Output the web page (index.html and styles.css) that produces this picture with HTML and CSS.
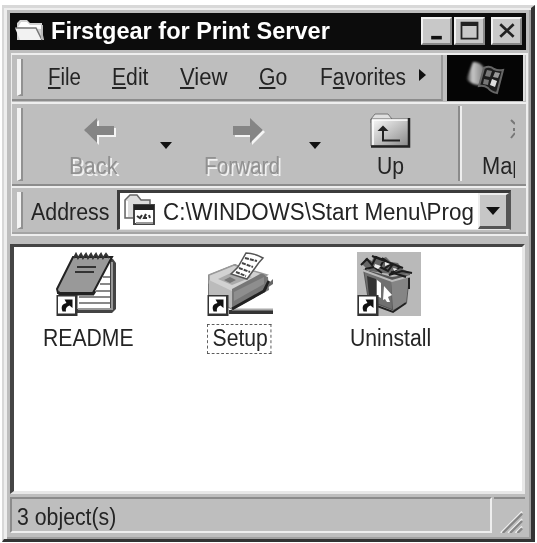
FILE: index.html
```html
<!DOCTYPE html>
<html lang="en">
<head>
<meta charset="utf-8">
<title>Firstgear for Print Server</title>
<link rel="stylesheet" href="styles.css">
</head>
<body>
<svg width="0" height="0" class="defs">
  <symbol id="shortcut" viewBox="0 0 21 21">
    <path d="M0 0H21V21H0Z" fill="#333"/><path d="M1.500 1.500H18.500V18.500H1.500Z" fill="#fff"/>
    <path d="M6 16.500C4 11 6 9 10 8L8 4.500H16V13L13 10.500C10 12 9 13 9.500 16.500Z" fill="#111"/>
  </symbol>
</svg>
<main class="window">
  <header class="titlebar">
    <svg class="folder" viewBox="0 0 32 26"><path d="M3 22V5L6 2H13L16 5H28V12L30 22Z" fill="#d2d2d2"/><path d="M4 9L7 4H13L16 7H27V11" fill="#fff"/><path d="M1 10H22L28 22H6Z" fill="#f2f2f2"/><path d="M1 10H22L28 22" fill="none" stroke="#777" stroke-width="1.5"/><path d="M28 7V21" stroke="#bbb" stroke-width="2"/></svg>
    <h1><span class="t title-text">Firstgear for Print Server</span></h1>
    <div class="controls">
      <button aria-label="Minimize"><svg viewBox="0 0 30 27"><path d="M9 19H21V23H9Z" fill="#111"/></svg></button><button aria-label="Maximize"><svg viewBox="0 0 30 27"><path d="M5 3H25V23H5ZM7 8V21H23V8Z" fill="#222" fill-rule="evenodd"/></svg></button><button class="close" aria-label="Close"><svg viewBox="0 0 30 27"><path d="M8 6L23 20M23 6L8 20" stroke="#222" stroke-width="3"/></svg></button>
    </div>
  </header>
  <section class="rebar">
    <div class="menurow">
      <nav class="menu">
        <i class="grip"></i>
        <span class="t file"><u>F</u>ile</span><span class="t edit"><u>E</u>dit</span><span class="t view"><u>V</u>iew</span><span class="t go"><u>G</u>o</span><span class="t favorites">F<u>a</u>vorites</span>
        <svg class="more" viewBox="0 0 8 12"><path d="M0 0L7 6L0 12Z" fill="#111"/></svg>
      </nav>
      <div class="brand">
        <svg viewBox="0 0 76 45">
          <defs><linearGradient id="flag"><stop offset="0" stop-color="#333"/><stop offset=".3" stop-color="#c8c8c8"/><stop offset="1" stop-color="#777"/></linearGradient><filter id="soft"><feGaussianBlur stdDeviation="1"/></filter></defs>
          <path d="M20 22L26 7Q33 6 38 14L34 30Q27 31 20 25Z" fill="url(#flag)" filter="url(#soft)"/>
          <path d="M37 13Q43 10 47 14Q51 16 56 15L50 38Q44 37 41 33Q37 30 32 31Z" fill="#1c1c1c" stroke="#666" stroke-width="2"/>
          <path d="M40 15L45 16L43 22L38 21ZM37 24L42 25L41 30L36 29Z" fill="#777"/><path d="M48 17L53 18L51 23L46 22Z" fill="#999"/><path d="M45 24L50 26L48 32L43 30Z" fill="#ddd"/>
        </svg>
      </div>
    </div>
    <div class="toolbar">
      <i class="grip"></i>
      <div class="tool disabled back"><svg viewBox="0 0 34 30"><path class="hi" d="M3 15L16 3V11H33V20H16V28Z"/><path class="lo" d="M1 13L14 1V9H31V18H14V26Z"/></svg><span class="t">Back</span></div>
      <svg class="drop" viewBox="0 0 12 8"><path d="M0 0H12L6 7Z" fill="#111"/></svg>
      <div class="tool disabled forward"><svg viewBox="0 0 34 30"><path class="hi" d="M33 15L20 3V11H3V20H20V28Z"/><path class="lo" d="M31 13L18 1V9H1V18H18V26Z"/></svg><span class="t">Forward</span></div>
      <svg class="drop" viewBox="0 0 12 8"><path d="M0 0H12L6 7Z" fill="#111"/></svg>
      <div class="tool up"><svg viewBox="0 0 42 36"><defs><linearGradient id="paper" x2="1" y2="1"><stop offset=".1" stop-color="#f0f0f0"/><stop offset="1" stop-color="#888"/></linearGradient></defs><path d="M1 7L5 2H18L22 7V11H1Z" fill="#e0e0e0" stroke="#777"/><path d="M1 7H39V34H1Z" fill="url(#paper)" stroke="#666"/><path d="M3 8V33M2 8H39" stroke="#fff" stroke-width="1.5"/><path d="M39 6V34.500H1" fill="none" stroke="#222" stroke-width="2.500"/><path d="M13 17V28.500H30" fill="none" stroke="#222" stroke-width="2"/><path d="M7.500 19L13 13.500L18.500 19Z" fill="#222"/></svg><span class="t">Up</span></div>
      <i class="separator"></i>
      <div class="tool map"><svg viewBox="0 0 8 24"><path d="M1 2L5 6M4 10V13M5 15L1 20" fill="none" stroke="#777" stroke-width="2"/></svg><span class="t">Map</span></div>
    </div>
    <div class="addressrow">
      <i class="grip"></i>
      <span class="t address-label">Address</span>
      <div class="field">
        <svg class="location" viewBox="0 0 34 34"><path d="M3 25V7L8 2H15L19 7H28V25Z" fill="#ddd" stroke="#666" stroke-width="1.5"/><path d="M5 8V24" stroke="#fff" stroke-width="2"/><path d="M12 12H32V31H12Z" fill="#fff" stroke="#444" stroke-width="2"/><path d="M12 12H32V17H12Z" fill="#222"/><path d="M14 29H31V31H14Z" fill="#999"/><path d="M15 23L18 25L20 22M24 21L22 25H25M27 22L28 25" fill="none" stroke="#333" stroke-width="2"/></svg>
        <span class="t path">C:\WINDOWS\Start Menu\Prog</span>
        <button class="combo" aria-label="Open address list"><svg viewBox="0 0 14 8"><path d="M0 0H14L7 8Z" fill="#111"/></svg></button>
      </div>
    </div>
  </section>
  <section class="files">
    <div class="item readme">
      <svg viewBox="0 0 64 64"><path d="M19 7H57L60 11V57L56 61H20V48Z" fill="#444"/><path d="M23 9H54V57H21V46Z" fill="#fff"/><path d="M47 25H54M44 32H54M40 39H54M23 45H54M23 51H54" stroke="#888" stroke-width="2"/><path d="M56 10V57H22" fill="none" stroke="#999" stroke-width="2"/><path d="M17 5H56L37 41H2L1 37Z" fill="#999" stroke="#222" stroke-width="2"/><path d="M2 40L4 42H37L39 39" fill="none" stroke="#222" stroke-width="3"/><path d="M21 15H40M19 20H38" stroke="#333" stroke-width="2"/><path d="M18 6L20 2L22 6L25 2L27 6L30 2L32 6L35 2L37 6L40 2L42 6L45 2L47 6L50 2L53 6" fill="none" stroke="#333" stroke-width="2"/><use href="#shortcut" x="0" y="43" width="22" height="21"/></svg>
      <span class="t">README</span>
    </div>
    <div class="item setup">
      <svg viewBox="0 0 66 64"><path d="M22 60H66" stroke="#333" stroke-width="4"/><path d="M25 57.500H66" stroke="#aaa" stroke-width="2"/><path d="M1 23L28 12L61 25L62 38L25 58L1 43Z" fill="#777"/><path d="M2 23L27 13L60 23L25 41L2 31Z" fill="#d2d2d2" stroke="#999" stroke-width="1.500"/><path d="M2 28L25 39V57L2 43Z" fill="#bbb"/><path d="M25 37L53 22Q58 21 60 27V37L25 56Z" fill="#777"/><path d="M27 40L57 25V32L27 49Z" fill="#8e8e8e"/><path d="M25 57L57 39L62 29" fill="none" stroke="#222" stroke-width="3"/><path d="M62 31L66 27V32L60 36Z" fill="#666"/><path d="M11 27L28 19L45 25L25 33Z" fill="#aaa"/><path d="M17 28L23 25L29 28L23 31Z" fill="#777"/><path d="M24 22L31 15L39 1Q47 1 56 6Q52 10 48 16L40 27Z" fill="#fff" stroke="#555" stroke-width="1.500"/><path d="M38 6L50 9M35 11L46 15M32 16L43 20M29 20L39 24" stroke="#444" stroke-width="2" stroke-dasharray="4 1"/><use href="#shortcut" x="0" y="43" width="22" height="21"/></svg>
      <span class="t">Setup</span>
    </div>
    <div class="item uninstall">
      <svg viewBox="0 0 64 64"><path d="M0 0H64V64H0Z" fill="#b9b9b9"/><path d="M6 17L35 25L53 22L50 51L37 59L11 49Z" fill="#555"/><path d="M34 29L52 25L49 51L36 58Z" fill="#858585"/><path d="M7 18L34 29L35 57L12 48Z" fill="#707070"/><path d="M10 24L19 27V47L12 45Z" fill="#333"/><path d="M20 28L24 31V46L20 44Z" fill="#fff"/><path d="M27 34L35 43L31 45L33 50L30 50L28 47L26 48Z" fill="#fff"/><path d="M5 18L35 29L53 24" fill="none" stroke="#bbb" stroke-width="2"/><path d="M52 26V37M12 51L36 60L49 51" fill="none" stroke="#222" stroke-width="2"/><path d="M5 12L9 6L15 9L17 4L24 7L29 5L34 10L41 11L45 17L55 21L43 24L35 22L26 21L13 19L9 16Z" fill="#666"/><path d="M4 13L10 7L15 13L19 5L27 8L23 15L31 19L36 12L43 15L32 23L45 19L55 21M8 17L17 15L25 21M25 6L34 12L27 17M34 20L49 25M15 4L46 16" fill="none" stroke="#1c1c1c" stroke-width="2"/><path d="M18 12L24 14L21 17L17 15ZM28 10L33 12L28 14ZM36 16L41 17L37 19Z" fill="#eee"/><use href="#shortcut" x="0" y="43" width="22" height="21"/></svg>
      <span class="t">Uninstall</span>
    </div>
  </section>
  <footer class="status">
    <div class="count"><span class="t">3 object(s)</span></div>
    <div class="corner"><svg viewBox="0 0 24 26"><path d="M1 26L24 3M9 26L24 11M17 26L24 19" stroke="#f0f0f0" stroke-width="2"/><path d="M3 26L24 5M11 26L24 13M19 26L24 21" stroke="#858585" stroke-width="2.500"/></svg></div>
  </footer>
</main>
</body>
</html>
```
FILE: styles.css
```css
* { box-sizing: border-box; }
body { margin: 0; background: #fff; color: #242424; font: 23px/23px "Liberation Sans", Arial, sans-serif; overflow: hidden; }
svg { display: block; flex: none; }
.defs { display: none; }
button { padding: 0; border: 0; border-radius: 0; background: #c6c6c6; }
h1 { margin: 0; font-size: 23px; line-height: 23px; }
.t { display: inline-block; white-space: nowrap; transform: scaleX(.92); transform-origin: left; }
u { text-decoration-thickness: 2px; text-underline-offset: 2px; }

.window { width: 533px; height: 537px; margin: 5px 0 0 2px; padding: 5px 5px 3px 4px; background: #bebebe; border: solid; border-width: 3px 4px 3px 2px; border-color: #d8d8d8 #333 #333 #d8d8d8; box-shadow: inset 3px 2px #eee, inset -2px -2px #a0a0a0; display: flex; flex-direction: column; }

.titlebar { width: 516px; height: 37px; margin-left: 2px; background: #0c0c0c; color: #fff; display: flex; flex: none; }
.folder { width: 32px; height: 26px; margin: 5px 0 0 4px; }
.titlebar h1 { width: 278px; margin: 7px 0 0 5px; }
.title-text { transform: scaleX(1.024); }
.controls { display: flex; margin: 4px 0 0 92px; height: 28px; }
.controls button { width: 31px; height: 28px; border: 2px solid; border-color: #f2f2f2 #888 #888 #f2f2f2; margin-right: 2px; background: #c8c8c8; }
.controls button svg { width: 100%; height: 100%; }
.controls .close { margin-left: 4px; }

.rebar { flex: none; width: 517px; height: 183px; margin: 3px 0 0 3px; border: 2px solid #eee; border-width: 2px 2px 2px 1px; }
.menurow { display: flex; height: 47px; }
.menu { width: 431px; height: 46px; display: grid; grid-template-columns: 36px 64px 68px 79px 61px 99px 12px; padding: 11px 0 0; border-right: 2px solid #999; border-bottom: 2px solid #8c8c8c; }
.menu .file { transform: scaleX(.89); }
.menu .view { transform: scaleX(.96); }
.menu .favorites { transform: scaleX(.91); }
.more { width: 8px; height: 12px; margin-top: 3px; }
.menu .grip { margin: -7px 0 0 5px; height: 37px; }
.grip { display: block; width: 6px; border-left: 4px solid #f4f4f4; border-right: 2px solid #919191; border-bottom: 2px solid #919191; flex: none; }
.brand { width: 78px; height: 46px; margin-left: 4px; background: #050505; border-right: 2px solid #ddd; }
.brand svg { width: 76px; height: 45px; }

.toolbar { display: flex; height: 84px; border-top: 2px solid #eee; border-bottom: 2px solid #8c8c8c; overflow: hidden; }
.toolbar > .grip { margin: 4px 0 0 5px; height: 73px; }
.tool { display: flex; flex-direction: column; flex: none; height: 74px; }
.tool .t { margin-top: auto; }
.disabled { color: #919191; text-shadow: 2px 2px #f1f1f1; }
.disabled svg { width: 34px; height: 30px; margin-top: 13px; }
.hi { fill: #f5f5f5; }
.lo { fill: #858585; }
.back { width: 48px; margin-left: 46px; }
.back svg { margin-left: 14px; }
.back .t { transform: scaleX(.95); }
.drop { width: 12px; height: 8px; margin: 38px 0 0 43px; }
.forward { width: 76px; margin-left: 32px; }
.forward svg { margin-left: 28px; }
.forward .t { transform: scaleX(.9); }
.forward + .drop { margin-left: 29px; }
.up { width: 42px; margin-left: 49px; }
.up svg { width: 42px; height: 36px; margin-top: 8px; }
.up .t { margin-left: 7px; }
.separator { width: 4px; height: 75px; margin: 2px 0 0 46px; border-left: 2px solid #8b8b8b; border-right: 2px solid #eee; }
.map { width: 33px; margin-left: 20px; overflow: hidden; }
.map svg { width: 8px; height: 24px; margin: 14px 0 0 28px; }
.map .t { transform: scaleX(.95); }

.addressrow { display: flex; height: 48px; border-top: 2px solid #eee; border-bottom: 2px solid #a4a4a4; }
.addressrow > .grip { height: 37px; margin: 4px 0 0 5px; }
.address-label { width: 86px; flex: none; margin: 13px 0 0 8px; transform: scaleX(.93); }
.field { flex: none; width: 394px; height: 40px; margin-top: 2px; border: solid; border-color: #3c3c3c #555 #e6e6e6 #3c3c3c; border-width: 3px 2px 1px 3px; background: #fff; display: flex; }
.location { width: 34px; height: 34px; margin-left: 2px; }
.path { width: 314px; flex: none; margin: 8px 0 0 7px; transform: scaleX(.973); }
.combo { width: 31px; height: 36px; flex: none; margin-left: 1px; border: solid; border-width: 2px 3px 3px 2px; border-color: #eee #555 #555 #eee; display: flex; justify-content: center; align-items: center; }
.combo svg { width: 14px; height: 8px; }

.files { flex: none; width: 515px; height: 250px; margin: 8px 0 0 2px; border: solid; border-width: 3px 3px 3px 4px; border-color: #454545 #e8e8e8 #e8e8e8 #454545; background: #fff; display: grid; grid-template-columns: 162px 152px 1fr; padding: 5px 0 0 29px; align-items: start; }
.item { display: flex; flex-direction: column; }
.item svg { width: 64px; height: 64px; }
.item .t { margin-top: 11px; }
.readme { margin-left: 13px; }
.readme .t { margin-left: -13px; transform: scaleX(.92); }
.setup svg { width: 66px; }
.setup { margin-left: 2px; }
.setup .t { width: 70px; height: 30px; padding: 2px 0 0 5px; margin: 8px 0 0 0; border: 1px dashed #555; }
.uninstall .t { margin-left: -7px; transform: scaleX(.92); }

.status { width: 515px; height: 38px; flex: none; margin: 3px 0 0 2px; display: flex; }
.count { width: 482px; height: 36px; padding: 7px 0 0 5px; border: 2px solid; border-color: #8b8b8b #eee #eee #8b8b8b; }
.count .t { transform: scaleX(.925); }
.corner { width: 31px; height: 36px; margin-left: 2px; padding: 10px 0 0 5px; border-top: 2px solid #8b8b8b; }
.corner svg { width: 24px; height: 24px; }
```
